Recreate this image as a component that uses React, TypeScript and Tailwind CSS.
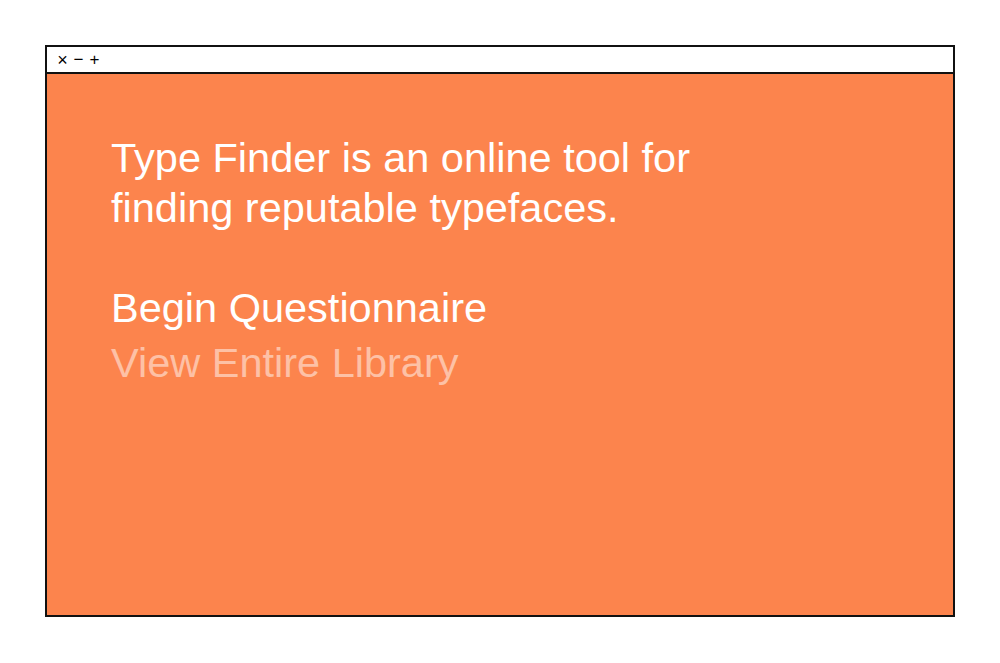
import React from "react";

export default function App() {
  return (
    <div className="min-h-[663px] w-[1000px] bg-white pt-[45px] pl-[45px]" style={{ fontFamily: '"Liberation Sans", Arial, sans-serif' }}>
      <div className="flex h-[572px] w-[910px] flex-col border-2 border-[#111111]">
        <div className="flex h-[27px] items-center gap-[5px] border-b-2 border-[#111111] bg-white pl-[10px] text-[17px] leading-none text-black">
          <span className="w-[11px] text-center text-[18px]">×</span>
          <span className="w-[11px] text-center">−</span>
          <span className="w-[11px] text-center">+</span>
        </div>
        <div className="flex-1 bg-[#fc844d] pl-[64px] pt-[59px] text-[41.5px] leading-[50px] text-white">
          <p>
            Type Finder is an online tool for
            <br />
            finding reputable typefaces.
          </p>
          <div className="mt-[50px] flex flex-col gap-[5px]">
            <a className="block">Begin Questionnaire</a>
            <a className="block text-white/50">View Entire Library</a>
          </div>
        </div>
      </div>
    </div>
  );
}
